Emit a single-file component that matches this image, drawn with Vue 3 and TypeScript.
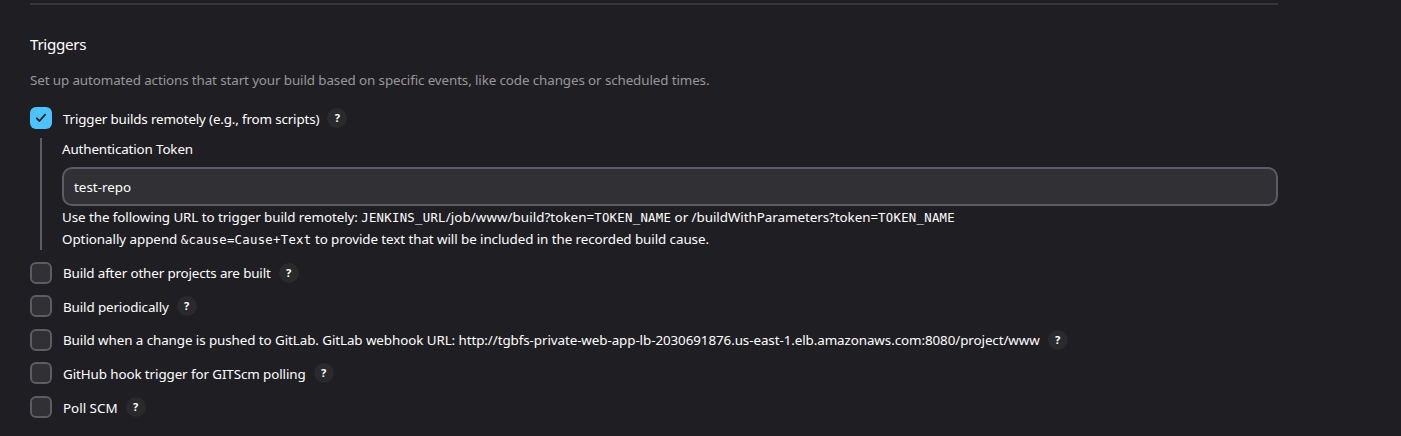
<script setup lang="ts">
import { ref } from 'vue'

interface Trigger {
  id: string
  label: string
  checked: boolean
}

const token = ref('test-repo')
const remote = ref(true)
const triggers = ref<Trigger[]>([
  { id: 'upstream', label: 'Build after other projects are built', checked: false },
  { id: 'timer', label: 'Build periodically', checked: false },
  {
    id: 'gitlab',
    label:
      'Build when a change is pushed to GitLab. GitLab webhook URL: http://tgbfs-private-web-app-lb-2030691876.us-east-1.elb.amazonaws.com:8080/project/www',
    checked: false,
  },
  { id: 'github', label: 'GitHub hook trigger for GITScm polling', checked: false },
  { id: 'scm', label: 'Poll SCM', checked: false },
])
</script>

<template>
  <main class="page">
    <section class="section">
      <h2 class="title">Triggers</h2>
      <p class="description">Set up automated actions that start your build based on specific events, like code changes or scheduled times.</p>

      <div class="row first">
        <button class="box" :class="{ checked: remote }" role="checkbox" :aria-checked="remote" @click="remote = !remote">
          <svg v-if="remote" viewBox="0 0 22 22" width="22" height="22">
            <path d="M6.8 11.3 L9.5 14 L15.1 7.7" />
          </svg>
        </button>
        <span class="label remote">Trigger builds remotely (e.g., from scripts)</span>
        <button class="help">?</button>
      </div>

      <div class="nested">
        <label class="field-label" for="token">Authentication Token</label>
        <input id="token" v-model="token" class="input" type="text" />
        <div class="hint"><span class="use">Use the following URL to trigger build remotely: </span><code>JENKINS_URL</code><span class="path">/job/www/build?token=</span><code>TOKEN_NAME</code><span class="alt"> or /buildWithParameters?token=</span><code>TOKEN_NAME</code></div>
        <div class="hint"><span class="alt">Optionally append </span><code>&amp;cause=Cause+Text</code><span class="use"> to provide text that will be included in the recorded build cause.</span></div>
      </div>

      <div class="list">
        <div v-for="t in triggers" :key="t.id" class="row">
          <button class="box" :class="{ checked: t.checked }" role="checkbox" :aria-checked="t.checked" @click="t.checked = !t.checked">
            <svg v-if="t.checked" viewBox="0 0 22 22" width="22" height="22">
              <path d="M6.8 11.3 L9.5 14 L15.1 7.7" />
            </svg>
          </button>
          <span class="label" :class="t.id">{{ t.label }}</span>
          <button class="help">?</button>
        </div>
      </div>
    </section>
  </main>
</template>

<style>
body {
  background: #1f1e23;
}
</style>

<style scoped>
.page {
  box-sizing: border-box;
  width: 1401px;
  height: 436px;
  padding: 3px 123px 0 30px;
  overflow: hidden;
  background: #1f1e23;
  color: #fff;
  font: 13.4px/22px "Noto Sans", sans-serif;
  white-space: pre;
}
.section {
  border-top: 2px solid #37363b;
}
.title {
  margin: 28px 0 0;
  font-size: 15.2px;
  font-weight: 400;
  line-height: 22px;
  letter-spacing: -0.3px;
}
.description {
  margin: 14px 0 0;
  color: #98989b;
  letter-spacing: -0.11px;
}
.row {
  display: flex;
  align-items: center;
  height: 22px;
}
.first {
  margin-top: 16px;
}
.box {
  box-sizing: border-box;
  flex: none;
  width: 22px;
  height: 22px;
  margin: 0 11px 0 0;
  padding: 0;
  border: 2px solid #5c5b66;
  border-radius: 6px;
  background: #313035;
}
.box.checked {
  border: 0;
  background: #4cc2ff;
}
.box svg {
  display: block;
  fill: none;
  stroke: #1f1e23;
  stroke-width: 1.8;
  stroke-linecap: round;
  stroke-linejoin: round;
}
.label {
  padding-top: 1px;
}
.remote {
  letter-spacing: -0.16px;
}
.upstream {
  padding-top: 0;
  letter-spacing: -0.14px;
}
.timer {
  letter-spacing: -0.12px;
}
.gitlab {
  padding-top: 0;
  letter-spacing: -0.082px;
}
.github {
  letter-spacing: -0.1px;
}
.scm {
  padding-top: 2px;
}
.help {
  flex: none;
  width: 20px;
  height: 20px;
  margin: 0 0 0 8px;
  padding: 0;
  border: 0;
  border-radius: 50%;
  background: #2a2a2d;
  color: #fff;
  font: 700 11px/20px "Noto Sans", sans-serif;
}
.nested {
  margin: 9px 0 0 10px;
  height: 112px;
  border-left: 2px solid #5c5b66;
  padding-left: 20px;
}
.field-label {
  display: block;
  letter-spacing: -0.14px;
}
.input {
  display: block;
  box-sizing: border-box;
  width: 100%;
  height: 39px;
  margin: 7px 0 0;
  padding: 0 10px;
  border: 2px solid #5c5b66;
  border-radius: 10px;
  outline: 0;
  background: #313035;
  color: #fff;
  font: inherit;
}
.hint {
  height: 22px;
}
.use {
  letter-spacing: -0.078px;
}
.path {
  letter-spacing: 0.05px;
}
.alt {
  letter-spacing: -0.05px;
}
code {
  font: 12.3px/22px "DejaVu Sans Mono", monospace;
  letter-spacing: 0.29px;
}
.list {
  display: flex;
  flex-direction: column;
  gap: 11.4px;
  margin-top: 12px;
}
</style>
